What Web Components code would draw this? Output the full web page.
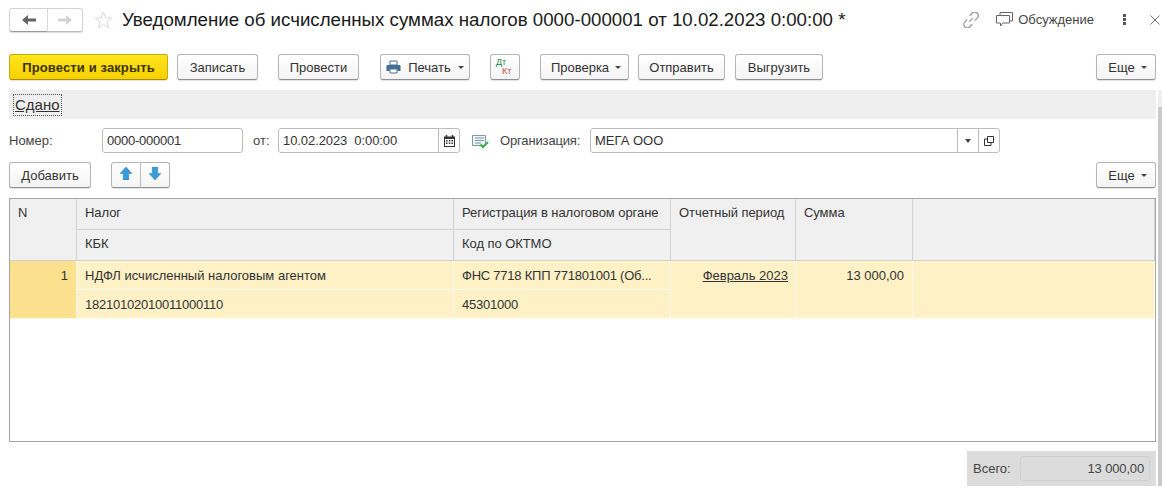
<!DOCTYPE html>
<html lang="ru">
<head>
<meta charset="utf-8">
<title>Уведомление</title>
<style>
  html, body { margin: 0; padding: 0; background: #fff; overflow: hidden; }
  body { font: 13px "Liberation Sans", Arial, sans-serif; color: #333; }
</style>
</head>
<body>
<doc-form>
  <title-bar slot="title">Уведомление об исчисленных суммах налогов 0000-000001 от 10.02.2023 0:00:00 *</title-bar>

  <tool-row slot="commands">
    <ui-button kind="primary" w="159">Провести и закрыть</ui-button>
    <ui-button w="81" gap="9">Записать</ui-button>
    <ui-button w="81" gap="20">Провести</ui-button>
    <ui-button w="90" gap="21" menu style="padding-left:0;gap:7px">
      <svg slot="icon" width="15" height="14" viewBox="0 0 15 14"><path d="M4 1h7v4H4z" fill="#fff" stroke="#4d6f8f"/><path d="M1.500 5h12a1 1 0 0 1 1 1v5h-3V9h-8v2h-3V6a1 1 0 0 1 1-1z" fill="#3f6d96"/><path d="M4 9h7v4H4z" fill="#fff" stroke="#4d6f8f"/></svg>
      Печать
    </ui-button>
    <ui-button w="30" gap="20"><dt-kt></dt-kt></ui-button>
    <ui-button w="89" gap="20" menu>Проверка</ui-button>
    <ui-button w="87" gap="9">Отправить</ui-button>
    <ui-button w="88" gap="10">Выгрузить</ui-button>
    <ui-button w="60" push menu>Еще</ui-button>
  </tool-row>

  <status-band slot="band">Сдано</status-band>

  <field-row slot="fields">
    <ui-label w="93">Номер:</ui-label>
    <ui-input w="141" num>0000-000001</ui-input>
    <ui-label w="25" gap="10">от:</ui-label>
    <ui-input w="182" style="letter-spacing:-.08px">10.02.2023&nbsp; 0:00:00<field-btn slot="end" w="21">
        <svg width="11" height="12" viewBox="0 0 11 12"><path d="M2.500 0v2M8.500 0v2" stroke="#333" stroke-width="1.500"/><path d="M0 1.500h11V12H0z" fill="#333"/><path d="M1 4h9v7H1z" fill="#fff"/><path d="M2 5h1.500v1.500H2zM4.800 5h1.500v1.500H4.800zM7.500 5H9v1.500H7.500zM2 7.500h1.500V9H2zM4.800 7.500h1.500V9H4.800zM7.500 7.500H9V9H7.500z" fill="#333"/></svg>
      </field-btn></ui-input>
    <svg class="note" width="17" height="16" viewBox="0 0 17 16" style="margin:0 11px 0 12px;flex:none">
      <path d="M.5 2.500h13v10H.5z" fill="#eef3f5" stroke="#7f98a6"/>
      <path d="M3 5h9M3 7.500h9M3 10h6" stroke="#7f98a6"/>
      <path d="M8.500 11.500l2.500 2.500 5-5" fill="none" stroke="#3fae4a" stroke-width="2"/>
    </svg>
    <ui-label w="90" tight>Организация:</ui-label>
    <ui-input w="410">МЕГА ООО<field-btn slot="end" w="21"><span style="display:block;width:0;height:0;border:3.500px solid transparent;border-top:4px solid #444;border-bottom:0"></span></field-btn><field-btn slot="end" w="21">
        <svg width="10" height="10" viewBox="0 0 10 10"><path d="M3.500.5h6v6h-6z" fill="none" stroke="#333"/><path d="M3 3H.5v6.500H7V7" fill="none" stroke="#333"/></svg>
      </field-btn></ui-input>
  </field-row>

  <tool-row slot="rows">
    <ui-button w="82">Добавить</ui-button>
    <ui-button w="30" gap="20" join="left">
      <svg width="12" height="13" viewBox="0 0 13 14"><path d="M6.500 0L13 7H9.500v7h-6V7H0z" fill="#3a9bd8" stroke="#2d7fb5" stroke-width=".5"/></svg>
    </ui-button>
    <ui-button w="29" join="right">
      <svg width="12" height="13" viewBox="0 0 13 14"><path d="M6.500 14L13 7H9.500V0h-6v7H0z" fill="#3a9bd8" stroke="#2d7fb5" stroke-width=".5"/></svg>
    </ui-button>
    <ui-button w="60" push menu>Еще</ui-button>
  </tool-row>

  <data-table slot="table">
    <t-cell head span-rows="2">N</t-cell>
    <t-cell head>Налог</t-cell>
    <t-cell head>Регистрация в налоговом органе</t-cell>
    <t-cell head span-rows="2">Отчетный период</t-cell>
    <t-cell head span-rows="2">Сумма</t-cell>
    <t-cell head span-rows="2"></t-cell>
    <t-cell head>КБК</t-cell>
    <t-cell head>Код по ОКТМО</t-cell>

    <t-cell mark span-rows="2" right>1</t-cell>
    <t-cell>НДФЛ исчисленный налоговым агентом</t-cell>
    <t-cell num>ФНС 7718 КПП 771801001 (Об...</t-cell>
    <t-cell span-rows="2" right link>Февраль 2023</t-cell>
    <t-cell span-rows="2" right style="padding-right:8px">13 000,00</t-cell>
    <t-cell span-rows="2"></t-cell>
    <t-cell num>18210102010011000110</t-cell>
    <t-cell num>45301000</t-cell>
  </data-table>

  <total-box slot="footer" label="Всего:">13 000,00</total-box>
</doc-form>

<script>
// small helper, every element here is just markup + styles in an open shadow root
function defineEl(name, css, html, setup) {
  customElements.define(name, class extends HTMLElement {
    constructor() {
      super();
      const shadow = this.attachShadow({ mode: 'open' });
      shadow.innerHTML = `<style>${css}</style>${html}`;
    }
    connectedCallback() {
      if (setup) setup(this);
    }
  });
}

defineEl('doc-form', `
  :host { display: flex; flex-direction: column; position: relative; width: 1162px; height: 492px; padding: 8px 6px 0 9px; box-sizing: border-box; overflow: hidden; }
  .scroll { position: absolute; right: 0; top: 90px; width: 4px; height: 396px; background: #efefef; }
  .scroll i { display: block; margin-top: 17px; height: 379px; background: #c9c9c9; }
`, `
  <slot name="title"></slot>
  <slot name="commands"></slot>
  <slot name="band"></slot>
  <slot name="fields"></slot>
  <slot name="rows"></slot>
  <slot name="table"></slot>
  <slot name="footer"></slot>
  <div class="scroll"><i></i></div>
`);

defineEl('title-bar', `
  :host { display: flex; align-items: center; height: 24px; color: #1a1a1a; margin-bottom: 22px; position: relative; }
  .nav { display: flex; width: 74px; height: 24px; box-sizing: border-box; border: 1px solid #d4d4d4; border-bottom-color: #bdbdbd; border-radius: 3px; box-shadow: 0 1px 1px #ddd; flex: none; }
  .nav span { flex: 1; display: flex; align-items: center; justify-content: center; }
  .nav span:first-child { flex: 0 0 37px; border-right: 1px solid #d8d8d8; border-bottom: 1px solid #999; margin-bottom: -1px; border-radius: 0 0 0 3px; }
  .star { margin: 0 10px 0 12px; flex: none; }
  .t { font-size: 18.7px; white-space: nowrap; flex: none; }
  .side { display: flex; align-items: center; margin-left: auto; color: #444; margin-right: -6px; margin-top: -1px; }
  .side .disc { margin: 0 0 0 17px; }
  .side .lab { margin: 0 29px 0 5px; }
  .side .x { margin-left: 24px; margin-right: 2px; }
`, `
  <div class="nav">
    <span><svg width="14" height="10" viewBox="0 0 14 10"><path d="M0 5l6-5v3.500h8v3H6V10z" fill="#666"/></svg></span>
    <span><svg width="14" height="10" viewBox="0 0 14 10"><path d="M14 5L8 0v3.500H0v3h8V10z" fill="#d2d2d2"/></svg></span>
  </div>
  <svg class="star" width="17" height="18" viewBox="0 0 17 18"><path d="M8.500 1l2.200 5.700 5.800.4-4.500 3.800 1.500 5.900-5-3.300-5 3.300 1.500-5.900L.5 7.100l5.800-.4z" fill="#fff" stroke="#d8d8d8"/></svg>
  <span class="t"><slot></slot></span>
  <div class="side">
    <svg width="16" height="16" viewBox="1.500 1.500 13 13" fill="none" stroke="#9a9a9a"><path d="M6.500 9.500l3-3M7 4.500l2-2a2.800 2.800 0 0 1 4 4l-2 2M9 11.500l-2 2a2.800 2.800 0 0 1-4-4l2-2"/></svg>
    <svg class="disc" width="17" height="15" viewBox="0 0 17 15" fill="none" stroke="#666"><path d="M4 3V.5h12.500V9H14"/><path d="M.5 3.500H13.500V11H7l-2.500 3v-3h-4z" fill="#fff"/></svg>
    <span class="lab">Обсуждение</span>
    <svg width="3" height="11" viewBox="0 0 3 11"><path d="M0 0h3v3H0zM0 4h3v3H0zM0 8h3v3H0z" fill="#555"/></svg>
    <svg class="x" width="10" height="10" viewBox="0 0 10 10"><path d="M.5.5l9 9M9.500.5l-9 9" stroke="#777"/></svg>
  </div>
`);

defineEl('tool-row', `
  :host { display: flex; align-items: stretch; height: 26px; }
`, `<slot></slot>`);

defineEl('ui-button', `
  :host { display: flex; flex: none; align-items: center; justify-content: center; box-sizing: border-box; height: 26px; gap: 6px; color: #333; white-space: nowrap;
    background: linear-gradient(#fff, #f4f4f4); border: 1px solid #b5b5b5; border-bottom-color: #8f8f8f; border-radius: 3px; box-shadow: 0 1px 1px #e2e2e2; }
  :host([kind="primary"]) { background: linear-gradient(#ffe51e, #f7d000); border-color: #c9aa10; border-bottom-color: #a88d00; font-weight: bold; letter-spacing: .12px; color: #3a3200; }
  :host([join="left"]) { border-radius: 3px 0 0 3px; }
  :host([join="right"]) { border-radius: 0 3px 3px 0; border-left: 0; }
  :host([push]) { margin-left: auto; }
  :host([menu]) { padding-left: 3px; }
  .caret { display: none; width: 0; height: 0; border: 3px solid transparent; border-top: 3.5px solid #444; border-bottom: 0; }
  :host([menu]) .caret { display: block; }
`, `<slot name="icon"></slot><span><slot></slot></span><i class="caret"></i>`, el => {
  if (el.hasAttribute('w')) el.style.width = el.getAttribute('w') + 'px';
  if (el.hasAttribute('gap')) el.style.marginLeft = el.getAttribute('gap') + 'px';
});

// the Дт/Кт glyph is small coloured text, staggered
defineEl('dt-kt', `
  :host { display: block; width: 18px; height: 18px; font-size: 9px; line-height: 9px; margin-top: -1px; }
  b { display: block; font-weight: normal; }
  .d { color: #1d8c4f; }
  .k { color: #c6474b; margin-left: 6px; }
`, `<b class="d">Дт</b><b class="k">Кт</b>`);

defineEl('status-band', `
  :host { display: flex; align-items: center; height: 29px; margin-top: 10px; background: #efefef; padding-left: 5px; font-size: 15px; color: #333; }
  span { display: block; text-decoration: underline; outline: 1px dotted #555; outline-offset: 0; padding: 1px 1px 2px 1px; line-height: 17px; }
`, `<span><slot></slot></span>`);

defineEl('field-row', `
  :host { display: flex; align-items: center; height: 25px; margin: 9px 0; }
`, `<slot></slot>`);

defineEl('ui-label', `
  :host { display: block; flex: none; color: #444; white-space: nowrap; }
  :host([tight]) { letter-spacing: -.15px; }
`, `<slot></slot>`, el => {
  el.style.width = el.getAttribute('w') + 'px';
  if (el.hasAttribute('gap')) el.style.marginLeft = el.getAttribute('gap') + 'px';
});

defineEl('ui-input', `
  :host { display: flex; flex: none; align-items: stretch; height: 25px; box-sizing: border-box; border: 1px solid #bdbdbd; border-radius: 3px; background: #fff; color: #333; }
  :host([num]) .v { letter-spacing: -.23px; }
  .v { flex: 1; display: flex; align-items: center; padding-left: 4px; white-space: nowrap; }
`, `<div class="v"><slot></slot></div><slot name="end"></slot>`, el => {
  el.style.width = el.getAttribute('w') + 'px';
});

defineEl('field-btn', `
  :host { display: flex; flex: none; align-items: center; justify-content: center; box-sizing: border-box; border-left: 1px solid #bdbdbd; }
`, `<slot></slot>`, el => {
  el.style.width = el.getAttribute('w') + 'px';
});

defineEl('data-table', `
  :host { display: block; height: 244px; margin-top: 10px; box-sizing: border-box; border: 1px solid #a5a5a5; background: #fff; }
  .g { display: grid; grid-template-columns: 67px 377px 217px 125px 117px 1fr; grid-template-rows: 31px 31px 29px 29px; }
`, `<div class="g"><slot></slot></div>`);

defineEl('t-cell', `
  :host { display: block; box-sizing: border-box; padding: 1px 7px 0 8px; line-height: 27px; background: #fdf1c5; color: #333; white-space: nowrap; overflow: hidden;
    border-right: 1px solid #fffaea; border-bottom: 1px solid #fffaea; }
  :host([head]) { background: #f0f0f0; padding-top: 0; line-height: 28px; letter-spacing: -.06px; border-right-color: #d2d2d2; border-bottom-color: #d2d2d2; }
  :host([mark]) { background: #fbe08e; padding-right: 8px; }
  :host([right]) { text-align: right; }
  :host([link]) { text-decoration: underline; }
  :host([num]) { letter-spacing: -.23px; }
  span { display: block; }
`, `<span><slot></slot></span>`, el => {
  if (el.hasAttribute('span-rows')) el.style.gridRow = 'span ' + el.getAttribute('span-rows');
});

defineEl('total-box', `
  :host { display: flex; align-items: center; align-self: flex-end; width: 189px; height: 35px; box-sizing: border-box; margin-top: 9px; padding: 0 6px 0 6px; background: #dcdcdc; color: #444; }
  .l { width: 47px; flex: none; }
  .f { flex: 1; height: 25px; box-sizing: border-box; border: 1px solid #cfcfcf; border-radius: 3px; text-align: right; line-height: 23px; padding-right: 5px; background: #dcdcdc; letter-spacing: -.15px; }
`, `<span class="l"></span><div class="f"><slot></slot></div>`, el => {
  el.shadowRoot.querySelector('.l').textContent = el.getAttribute('label');
});
</script>
</body>
</html>
